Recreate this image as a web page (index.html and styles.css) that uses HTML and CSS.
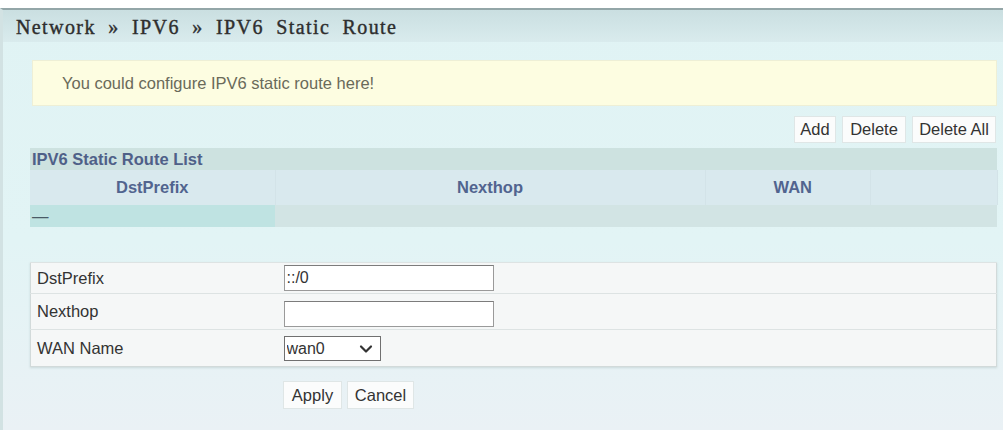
FILE: index.html
```html
<!DOCTYPE html>
<html>
<head>
<meta charset="utf-8">
<title>IPV6 Static Route</title>
<link rel="stylesheet" href="styles.css">
</head>
<body>
<div class="page">
  <div class="titlebar">Network » IPV6 » IPV6 Static Route</div>
  <div class="content">
    <div class="notice">You could configure IPV6 static route here!</div>
    <div class="toolbar">
      <button class="btn btn-add">Add</button>
      <button class="btn btn-del">Delete</button>
      <button class="btn btn-delall">Delete All</button>
    </div>
    <table class="list">
      <colgroup>
        <col class="c1"><col class="c2"><col class="c3"><col class="c4">
      </colgroup>
      <tr class="caption-row"><td colspan="4">IPV6 Static Route List</td></tr>
      <tr class="head-row">
        <th>DstPrefix</th><th>Nexthop</th><th class="wan">WAN</th><th></th>
      </tr>
      <tr class="data-row">
        <td class="first">—</td><td></td><td></td><td></td>
      </tr>
    </table>
    <table class="form">
      <colgroup><col class="fl"><col class="fv"></colgroup>
      <tr class="r1">
        <td class="label">DstPrefix</td>
        <td class="value"><input class="txt" type="text" value="::/0"></td>
      </tr>
      <tr class="r2">
        <td class="label">Nexthop</td>
        <td class="value"><input class="txt" type="text" value=""></td>
      </tr>
      <tr class="r3">
        <td class="label">WAN Name</td>
        <td class="value">
          <span class="sel-wrap">
            <select class="sel"><option>wan0</option></select>
            <svg class="chev" width="14" height="10" viewBox="0 0 14 10"><path d="M2 2.5 L7 7.5 L12 2.5" fill="none" stroke="#333" stroke-width="2.2" stroke-linecap="round" stroke-linejoin="round"/></svg>
          </span>
        </td>
      </tr>
    </table>
    <div class="actions">
      <button class="btn btn-apply">Apply</button>
      <button class="btn btn-cancel">Cancel</button>
    </div>
  </div>
</div>
</body>
</html>
```

FILE: styles.css
```css
html, body {
  margin: 0;
  padding: 0;
  background: #ffffff;
}
body {
  font-family: "Liberation Sans", Arial, sans-serif;
  font-size: 16.5px;
  color: #333;
}
.page {
  margin-top: 8px;
  border-top: 2px solid #93a6a8;
  border-left: 3px solid #d2e2e3;
  height: 422px;
  box-sizing: border-box;
  background: linear-gradient(to bottom, #e0f3f4 0%, #e2f4f5 55%, #eaf1f5 100%);
}
.titlebar {
  height: 32px;
  box-sizing: border-box;
  padding-left: 13px;
  padding-top: 3px;
  background: linear-gradient(to bottom, #cadfe1, #d9ebed);
  font-family: "Liberation Serif", "DejaVu Serif", serif;
  font-size: 20px;
  letter-spacing: 1.4px;
  word-spacing: 6px;
  line-height: 29px;
  color: #2e2e2e;
  -webkit-text-stroke: 0.4px #2e2e2e;
  white-space: nowrap;
}
.content {
  padding: 18px 6px 0 27px;
}
.notice {
  margin-left: 2px;
  height: 46px;
  box-sizing: border-box;
  background: #fdfde1;
  border: 1px solid #eeefd6;
  padding-left: 29px;
  line-height: 44px;
  color: #6a6a5a;
  font-size: 16.5px;
  white-space: nowrap;
}
.toolbar {
  display: flex;
  justify-content: flex-end;
  gap: 6px;
  margin-top: 10px;
  margin-bottom: 5px;
  padding-right: 1px;
}
.btn {
  font-family: "Liberation Sans", Arial, sans-serif;
  font-size: 16.5px;
  color: #333;
  background: #fbfcfc;
  border: 1px solid #dfe6e6;
  height: 27px;
  padding: 0 5px;
  margin: 0;
  line-height: 25px;
}
.btn-add { width: 42px; padding: 0; }
.btn-del { width: 64px; padding: 0; }
.btn-delall { width: 84px; padding: 0; }
.list {
  width: 967px;
  border-collapse: collapse;
  table-layout: fixed;
}
.list .c1 { width: 245px; }
.list .c2 { width: 430px; }
.list .c3 { width: 165px; }
.list .c4 { width: 127px; }
.list td, .list th {
  padding: 0;
}
.caption-row td {
  height: 22px;
  background: #cde2e0;
  color: #4f6088;
  font-weight: bold;
  padding-left: 2px;
  white-space: nowrap;
  line-height: 22px;
}
.head-row th {
  height: 35px;
  background: #d9e9ee;
  color: #51648f;
  font-weight: bold;
  text-align: center;
  border-right: 1px solid #d3e3e8;
}
.head-row th.wan {
  text-align: left;
  padding-left: 68px;
}
.data-row td {
  height: 22px;
  background: #d2e4e4;
  line-height: 18px;
}
.data-row td.first {
  background: #bfe3e2;
  color: #4a5a66;
  padding-left: 2px;
}
.form {
  width: 967px;
  margin-top: 35px;
  border-collapse: collapse;
  table-layout: fixed;
  background: #f5f7f7;
  border: 1px solid #d2dada;
  box-shadow: 0 1px 2px rgba(150, 170, 170, 0.35);
}
.form .fl { width: 245px; }
.form td {
  border-top: 1px solid #dde3e3;
  padding: 0;
}
.form .label {
  padding-left: 6px;
  color: #333;
  font-size: 16.5px;
  white-space: nowrap;
}
.form .value {
  padding-left: 8px;
}
.form .r1 td { height: 30px; }
.form .r2 td { height: 35px; }
.form .r3 td { height: 36px; }
.txt {
  width: 210px;
  height: 26px;
  box-sizing: border-box;
  border: 1px solid #9a9a9a;
  border-top-color: #7c7c7c;
  background: #fff;
  font-family: "Liberation Sans", Arial, sans-serif;
  font-size: 16px;
  color: #333;
  padding: 0 2px;
  margin: 0;
  vertical-align: middle;
  outline: none;
}
.r2 .txt { margin-top: 4px; }
.sel-wrap {
  position: relative;
  display: inline-block;
  vertical-align: middle;
}
.sel {
  appearance: none;
  -webkit-appearance: none;
  width: 97px;
  height: 25px;
  box-sizing: border-box;
  border: 1px solid #707070;
  background: #fff;
  font-family: "Liberation Sans", Arial, sans-serif;
  font-size: 16px;
  color: #333;
  padding: 0 2px;
  margin: 0;
  display: block;
}
.chev {
  position: absolute;
  right: 8px;
  top: 8px;
  pointer-events: none;
}
.actions {
  display: flex;
  gap: 5px;
  margin-top: 14px;
  padding-left: 253px;
}
.btn-apply { width: 59px; height: 28px; padding: 0; }
.btn-cancel { width: 67px; height: 28px; padding: 0; }
```
